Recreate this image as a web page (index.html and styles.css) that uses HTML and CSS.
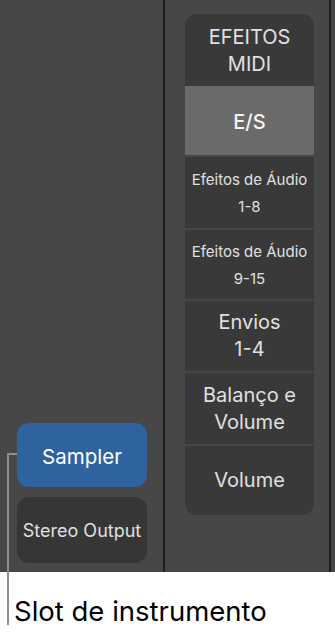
FILE: index.html
```html
<!DOCTYPE html>
<html lang="pt">
<head>
  <meta charset="UTF-8">
  <meta name="viewport" content="width=device-width, initial-scale=1.0">
  <title>Slot de instrumento</title>
  <link rel="stylesheet" href="styles.css">
</head>
<body>
  <div class="stage">
    <div class="strip">
      <div class="slot slot-instrument">Sampler</div>
      <div class="slot slot-output">Stereo Output</div>
    </div>
    <div class="divider"></div>
    <div class="side">
      <div class="menu">
        <div class="item item-midi">EFEITOS<br>MIDI</div>
        <div class="item item-active">E/S</div>
        <div class="item item-small item-fx1">Efeitos de Áudio<br>1-8</div>
        <div class="item item-small item-fx2">Efeitos de Áudio<br>9-15</div>
        <div class="item item-sends">Envios<br>1-4</div>
        <div class="item item-pan">Balanço e<br>Volume</div>
        <div class="item item-vol">Volume</div>
      </div>
    </div>
  </div>

  <div class="callout-h"></div>
  <div class="callout-v"></div>
  <div class="caption">Slot de instrumento</div>
</body>
</html>
```

FILE: styles.css
```css
* {
  box-sizing: border-box;
}
body {
  margin: 0;
  width: 335px;
  height: 638px;
  background: #fff;
  font-family: "Inter", "Roboto", sans-serif;
  position: relative;
  overflow: hidden;
}
.stage {
  height: 572px;
  background: #474747;
  display: flex;
}
.strip {
  width: 163px;
  display: flex;
  flex-direction: column;
  justify-content: flex-end;
  gap: 10px;
  padding: 0 16px 9px 17px;
}
.slot {
  display: flex;
  align-items: center;
  justify-content: center;
  border-radius: 12px;
  color: #fff;
}
.slot-instrument {
  height: 64px;
  background: #2f63a0;
  font-size: 20.5px;
  padding-top: 2px;
}
.slot-output {
  height: 66px;
  background: #363636;
  color: #e0e0e0;
  font-size: 18px;
}
.divider {
  width: 2px;
  background: #1e1e1e;
}
.side {
  flex: 1;
  padding: 14px 14px 0 20px;
  border-right: 2px solid #1e1e1e;
  margin-right: 4px;
}
.menu {
  width: 129px;
  background: #454545;
  border-radius: 12px;
  overflow: hidden;
  display: flex;
  flex-direction: column;
  gap: 2px;
}
.item {
  display: flex;
  align-items: center;
  justify-content: center;
  text-align: center;
  background: #393939;
  color: #e0e0e0;
  font-size: 20px;
  line-height: 27px;
}
.item-small {
  font-size: 15px;
}
.item-midi {
  height: 72px;
  margin-bottom: -2px;
  padding-top: 2px;
}
.item-active {
  height: 69px;
  background: #6a6a6a;
  color: #f4f4f4;
  font-weight: 500;
  padding-top: 3px;
}
.item-fx1 {
  height: 71px;
}
.item-fx2 {
  height: 69px;
}
.item-sends {
  height: 70px;
}
.item-pan {
  height: 71px;
}
.item-vol {
  height: 69px;
}
.callout-h {
  position: absolute;
  left: 7px;
  top: 453px;
  width: 10px;
  height: 2px;
  background: #8e8e8e;
}
.callout-v {
  position: absolute;
  left: 7px;
  top: 453px;
  width: 2px;
  height: 172px;
  background: #8e8e8e;
}
.caption {
  padding: 23px 0 0 14px;
  font-size: 27.5px;
  line-height: 32px;
  color: #000;
}
```
